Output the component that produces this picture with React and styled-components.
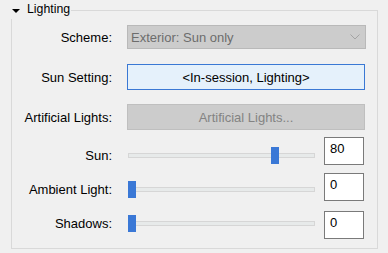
import styled, { createGlobalStyle } from "styled-components";

const GlobalStyle = createGlobalStyle`
  html, body {
    margin: 0;
    padding: 0;
    background: #f0f0f0;
  }
  body {
    font-family: "Liberation Sans", Arial, sans-serif;
    font-size: 13px;
    color: #000;
  }
`;

const Page = styled.div`
  width: 388px;
  height: 253px;
  padding-left: 11px;
  box-sizing: border-box;
`;

const Group = styled.div`
  width: 367px;
`;

const Header = styled.div`
  display: flex;
  height: 19px;
`;

const Arrow = styled.span`
  width: 0;
  height: 0;
  margin: 9px 0 0 1px;
  border-left: 4px solid transparent;
  border-right: 4px solid transparent;
  border-top: 4px solid #000;
`;

const Title = styled.span`
  font-size: 12.3px;
  line-height: 18px;
  margin-left: 7px;
  padding-right: 1px;
`;

const Rule = styled.div`
  flex: 1;
  margin-top: 10px;
  border-top: 1px solid #d9d9d9;
  border-right: 1px solid #d9d9d9;
`;

const Body = styled.div`
  border: 1px solid #d9d9d9;
  border-top: none;
  padding: 6px 11px 9px 0;
`;

const Row = styled.div`
  display: grid;
  grid-template-columns: 100px 1fr;
  column-gap: 15px;
  align-items: ${(p) => (p.$start ? "start" : "center")};
  margin-top: ${(p) => p.$mt || 0}px;
`;

const Label = styled.div`
  text-align: right;
  white-space: nowrap;
  line-height: 17px;
  margin-top: ${(p) => p.$mt || 0}px;
`;

const Combo = styled.div`
  height: 24px;
  box-sizing: border-box;
  background: #cccccc;
  border: 1px solid #b9b9b9;
  color: #6d6d6d;
  display: flex;
  align-items: center;
  justify-content: space-between;
  padding: 0 5px 0 3px;
`;

const Button = styled.div`
  height: 26px;
  width: 238px;
  box-sizing: border-box;
  display: flex;
  align-items: center;
  justify-content: center;
  border: 1px solid ${(p) => (p.$disabled ? "#bfbfbf" : "#3a78d4")};
  background: ${(p) => (p.$disabled ? "#cccccc" : "#e5f1fb")};
  color: ${(p) => (p.$disabled ? "#838383" : "#000")};
`;

const SliderCell = styled.div`
  display: flex;
  align-items: flex-start;
  gap: 9px;
  padding-left: 1px;
  padding-right: 2px;
`;

const Track = styled.div`
  flex: 1;
  position: relative;
  height: 17px;
  margin-top: ${(p) => p.$mt || 0}px;
  &::before {
    content: "";
    position: absolute;
    left: 0;
    right: 0;
    top: 6px;
    height: 5px;
    box-sizing: border-box;
    background: #e7eaea;
    border: 1px solid #d6d6d6;
  }
`;

const Thumb = styled.div`
  position: absolute;
  top: 0;
  width: 8px;
  height: 17px;
  background: #3a78d6;
`;

const NumBox = styled.div`
  width: 40px;
  height: 28px;
  box-sizing: border-box;
  background: #fff;
  border: 1px solid #7a7a7a;
  padding: 3px 5px;
  line-height: 15px;
  color: #000;
`;

const Chevron = () => (
  <svg width="10" height="6" viewBox="0 0 10 6">
    <polyline points="0.5,0.5 5,5 9.5,0.5" fill="none" stroke="#a3a3a3" strokeWidth="1" />
  </svg>
);

const Slider = ({ value, mt }) => (
  <Track $mt={mt}>
    <Thumb style={{ left: `calc(${value / 100} * (100% - 8px))` }} />
  </Track>
);

const sliders = [
  { label: "Sun:", value: 80, mt: 10, rowMt: 7 },
  { label: "Ambient Light:", value: 0, mt: 8, rowMt: 8 },
  { label: "Shadows:", value: 0, mt: 4, rowMt: 10 },
];

const App = () => {
  return (
    <Page>
      <GlobalStyle />
      <Group>
        <Header>
          <Arrow />
          <Title>Lighting</Title>
          <Rule />
        </Header>
        <Body>
          <Row>
            <Label>Scheme:</Label>
            <Combo>
              <span>Exterior: Sun only</span>
              <Chevron />
            </Combo>
          </Row>
          <Row $mt={15}>
            <Label>Sun Setting:</Label>
            <Button>&lt;In-session, Lighting&gt;</Button>
          </Row>
          <Row $mt={14}>
            <Label>Artificial Lights:</Label>
            <Button $disabled>Artificial Lights...</Button>
          </Row>
          {sliders.map((s) => (
            <Row key={s.label} $start $mt={s.rowMt}>
              <Label $mt={s.mt}>{s.label}</Label>
              <SliderCell>
                <Slider value={s.value} mt={s.mt} />
                <NumBox>{s.value}</NumBox>
              </SliderCell>
            </Row>
          ))}
        </Body>
      </Group>
    </Page>
  );
};

export default App;
